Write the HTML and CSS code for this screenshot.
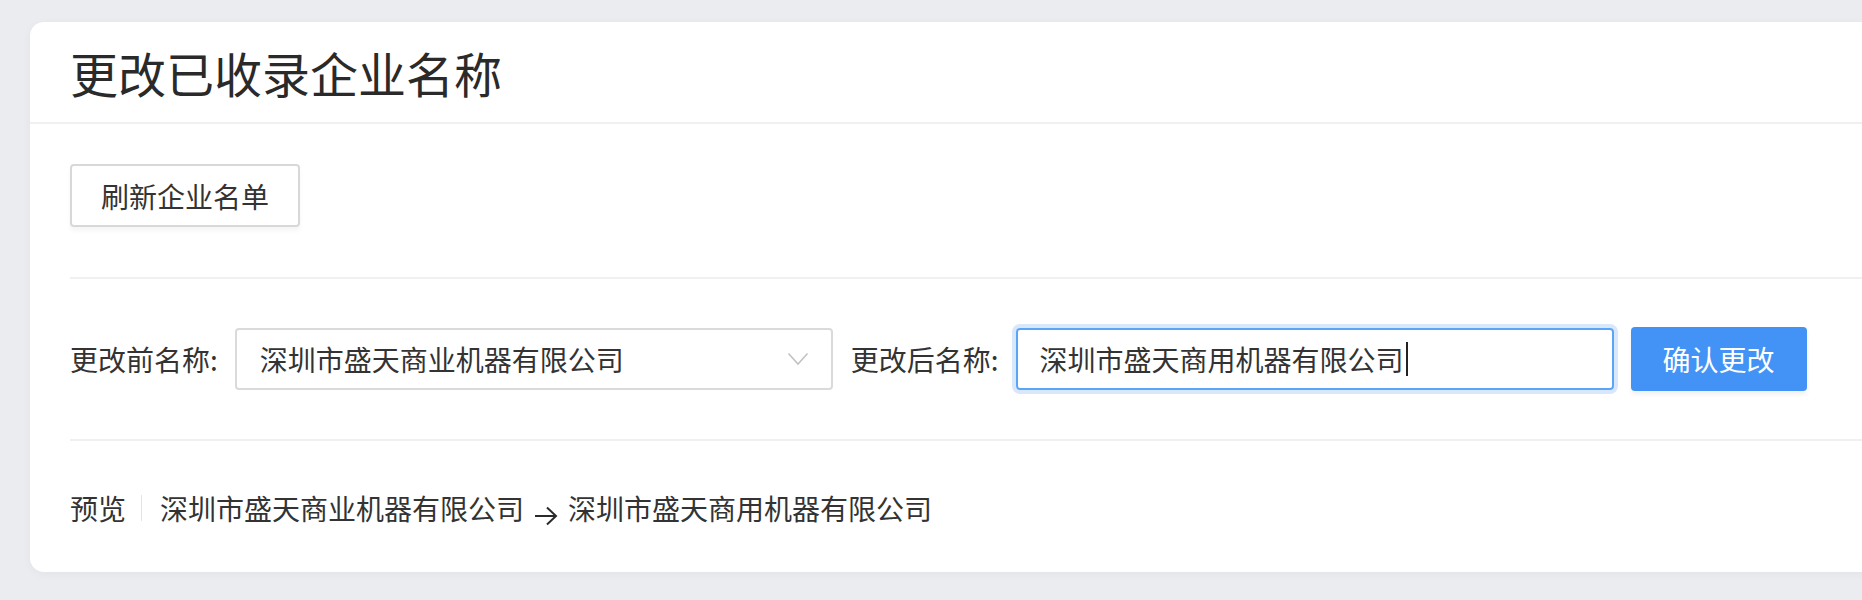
FILE: index.html
```html
<!DOCTYPE html>
<html lang="zh-CN">
<head>
<meta charset="utf-8">
<title>更改已收录企业名称</title>
<link rel="stylesheet" href="styles.css">
</head>
<body>
<div class="card">
  <div class="card-header">
    <h1 class="title">更改已收录企业名称</h1>
  </div>
  <div class="card-body">
    <div class="section section-refresh">
      <button class="btn btn-default">刷新企业名单</button>
    </div>
    <div class="section section-form">
      <span class="label">更改前名称:</span>
      <div class="select">
        <span class="select-text">深圳市盛天商业机器有限公司</span>
        <svg class="chevron" width="22" height="14" viewBox="0 0 22 14"><polyline points="1.5,1.5 11,12 20.5,1.5" fill="none" stroke="#c2c2c2" stroke-width="1.6"/></svg>
      </div>
      <span class="label">更改后名称:</span>
      <div class="input focused"><span class="input-text">深圳市盛天商用机器有限公司</span><span class="caret"></span></div>
      <button class="btn btn-primary">确认更改</button>
    </div>
    <div class="section section-preview">
      <span class="preview-label">预览</span>
      <span class="preview-divider"></span>
      <span class="preview-text">深圳市盛天商业机器有限公司</span>
      <svg class="arrow" width="26" height="24" viewBox="0 0 26 24"><path d="M2 12 H23 M14 3.5 L23 12 L14 20.5" fill="none" stroke="#2a2a2a" stroke-width="2"/></svg>
      <span class="preview-text">深圳市盛天商用机器有限公司</span>
    </div>
  </div>
</div>
</body>
</html>
```
FILE: styles.css
```css
html, body {
  margin: 0;
  padding: 0;
}
body {
  background: #ebecef;
  font-family: "Noto Sans CJK SC", "Noto Sans", sans-serif;
  color: #333;
  overflow: hidden;
  height: 600px;
}
.card {
  margin: 22px 0 0 30px;
  width: 1900px;
  height: 550px;
  background: #fff;
  border-radius: 14px;
  box-shadow: 0 2px 10px rgba(0, 0, 0, 0.04);
  box-sizing: border-box;
}
.card-header {
  height: 100px;
  padding-left: 40px;
  border-bottom: 2px solid #f0f0f0;
  display: flex;
  align-items: center;
}
.title {
  margin: 0;
  font-size: 48px;
  font-weight: 400;
  line-height: 1;
  color: #2a2a2a;
}
.card-body {
  padding: 0 0 0 40px;
}
.section {
  border-bottom: 2px solid #f0f0f0;
  display: flex;
  align-items: center;
}
.section-refresh {
  padding: 40px 0 50px;
}
.section-form {
  padding: 48px 0;
}
.section-preview {
  border-bottom: none;
  padding: 48px 0 0;
  height: 38px;
}
.btn {
  font-family: "Noto Sans CJK SC", "Noto Sans", sans-serif;
  font-size: 28px;
  height: 63px;
  padding: 0 29px;
  border-radius: 4px;
  line-height: 1;
  cursor: pointer;
}
.btn-default {
  background: #fff;
  color: #333;
  border: 2px solid #d8d8d8;
  box-shadow: 0 4px 4px rgba(0, 0, 0, 0.04);
}
.btn-primary {
  background: #4293f5;
  color: #fff;
  border: none;
  height: 64px;
  padding: 0 32px;
  margin-left: 17px;
  box-shadow: 0 4px 4px rgba(0, 0, 0, 0.05);
}
.label {
  font-size: 28px;
  margin-right: 17px;
  line-height: 1;
}
.select {
  width: 598px;
  height: 62px;
  box-sizing: border-box;
  border: 2px solid #dadada;
  border-radius: 4px;
  padding: 0 22px 0 23px;
  display: flex;
  align-items: center;
  justify-content: space-between;
  margin-right: 18px;
}
.select-text, .input-text {
  font-size: 28px;
  color: #333;
  line-height: 1;
}
.chevron {
  display: block;
}
.input {
  width: 598px;
  height: 62px;
  box-sizing: border-box;
  border: 2px solid #dadada;
  border-radius: 4px;
  padding: 0 22px;
  display: flex;
  align-items: center;
}
.input.focused {
  border-color: #5ba5f6;
  box-shadow: 0 0 0 4px #d8e7fb;
}
.caret {
  display: inline-block;
  width: 2px;
  height: 34px;
  background: #222;
  margin-left: 2px;
}
.preview-label {
  font-size: 28px;
  line-height: 38px;
}
.preview-divider {
  width: 1px;
  height: 26px;
  background: #e4e4e4;
  margin: 0 18px 0 15px;
}
.preview-text {
  font-size: 28px;
  line-height: 38px;
}
.arrow {
  margin: 16px 9px 0 9px;
}
```
